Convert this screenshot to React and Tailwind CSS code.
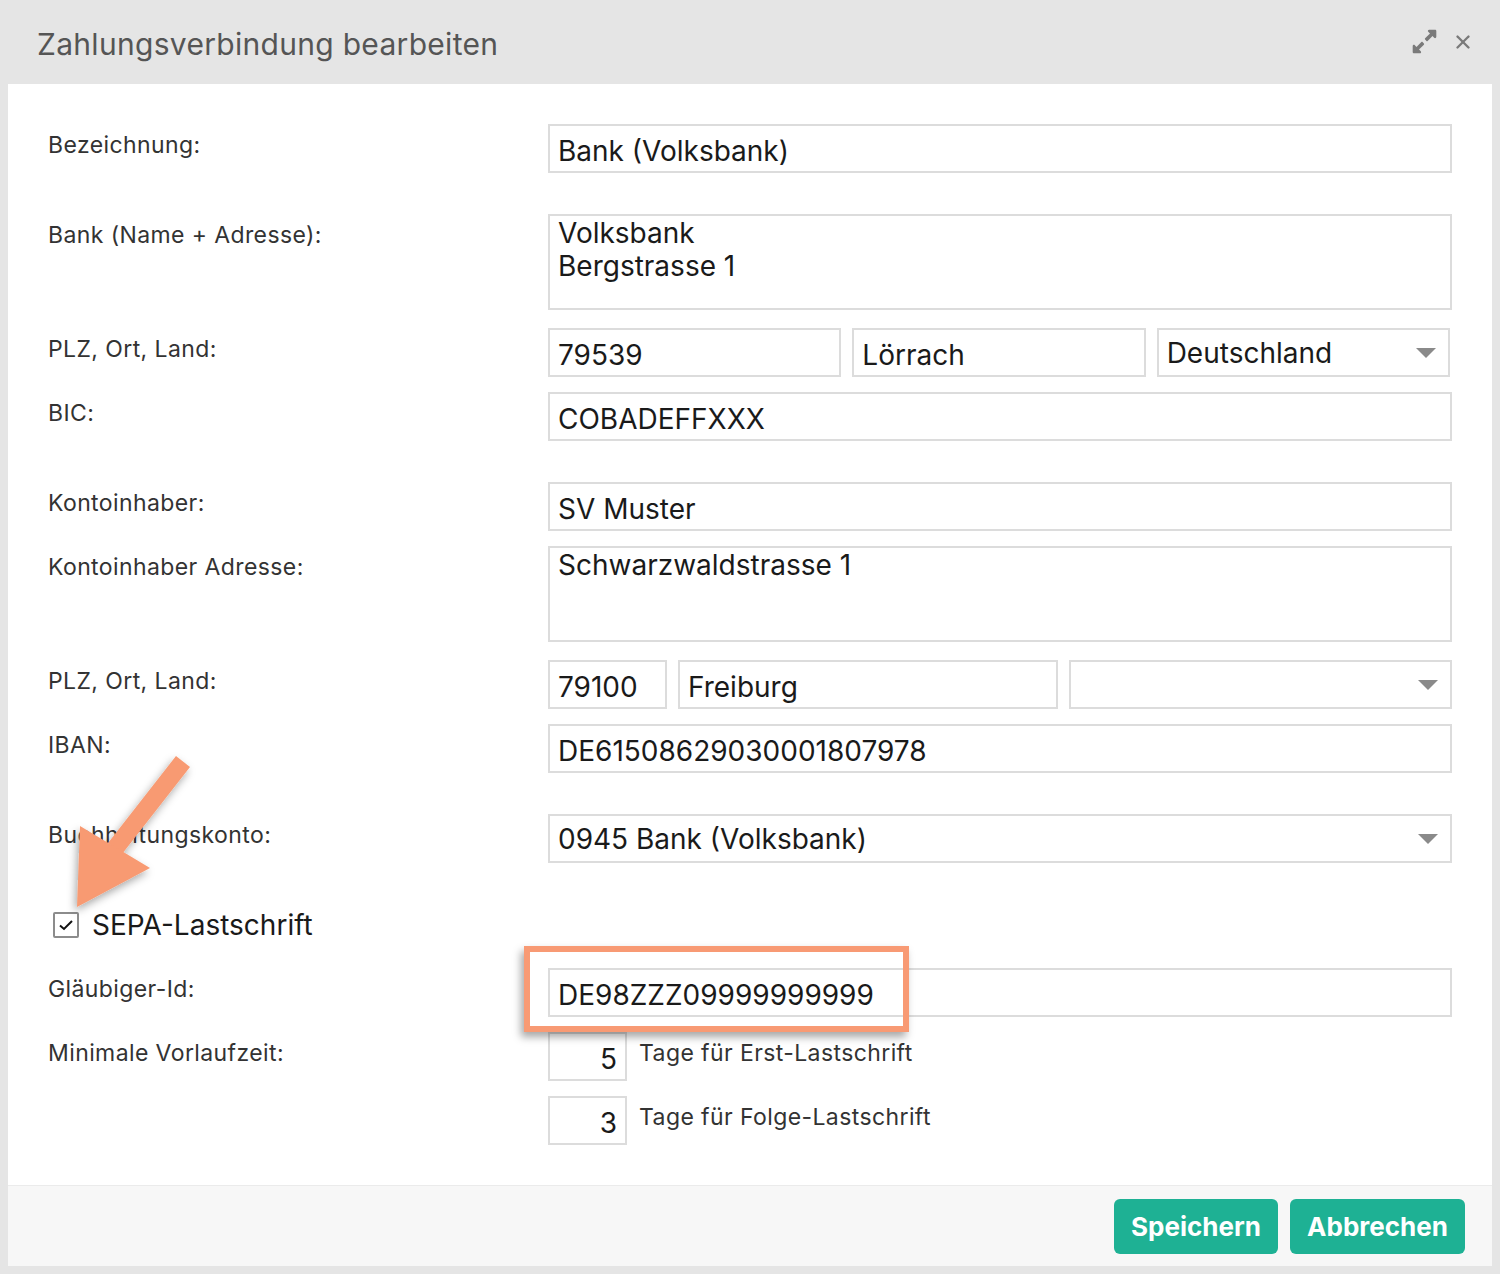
import React from 'react';
import { X } from 'lucide-react';
import { FaExpandAlt } from 'react-icons/fa';

const font = { fontFamily: 'Inter, "Noto Sans", sans-serif' };

const Label = ({ children }) => (
  <div className="w-[500px] shrink-0 pt-[8px] text-[23px] tracking-[0.4px] leading-[26px] text-[#333]">{children}</div>
);

const Input = ({ value, className = '' }) => (
  <div className={`h-[49px] border-2 border-[#dcdcdc] bg-white px-[8px] pt-[4px] flex items-center text-[28px] text-[#1a1a1a] whitespace-nowrap ${className}`}>
    {value}
  </div>
);

const TextArea = ({ lines }) => (
  <div className="h-[96px] flex-1 border-2 border-[#dcdcdc] bg-white px-[8px] pt-[1px] text-[28px] leading-[33px] text-[#1a1a1a]">
    {lines.map((l) => (
      <div key={l}>{l}</div>
    ))}
  </div>
);

const Select = ({ value, className = '' }) => (
  <div className={`h-[49px] border-2 border-[#dcdcdc] bg-white pl-[8px] pr-[12px] flex items-center justify-between text-[28px] text-[#1a1a1a] ${className}`}>
    <span>{value}</span>
    <svg width="20" height="10" viewBox="0 0 20 10">
      <polygon points="0,0 20,0 10,10" fill="#8a8a8a" />
    </svg>
  </div>
);

const Row = ({ label, mt, children }) => (
  <div className={`flex ${mt}`}>
    <Label>{label}</Label>
    <div className="flex-1 min-w-0">{children}</div>
  </div>
);

export default function App() {
  return (
    <div className="relative w-[1500px] h-[1274px] bg-[#e5e5e5] flex flex-col overflow-hidden" style={font}>
      {/* Header */}
      <div className="h-[84px] shrink-0 flex items-center justify-between pl-[37px] pr-[26px] pt-[5px]">
        <h1 className="text-[30px] tracking-[0.3px] text-[#555] font-normal">Zahlungsverbindung bearbeiten</h1>
        <div className="flex items-center gap-[14px] text-[#7a7a7a] mb-[6px]">
          <FaExpandAlt size={27} />
          <X size={22} strokeWidth={2.6} />
        </div>
      </div>

      {/* Body */}
      <div className="mx-[8px] bg-white px-[40px] pt-[40px] pb-[40px]">
        <Row label="Bezeichnung:" mt="">
          <Input value="Bank (Volksbank)" />
        </Row>
        <Row label="Bank (Name + Adresse):" mt="mt-[41px]">
          <div className="flex">
            <TextArea lines={['Volksbank', 'Bergstrasse 1']} />
          </div>
        </Row>
        <Row label="PLZ, Ort, Land:" mt="mt-[18px]">
          <div className="grid grid-cols-3 gap-[11px] pr-[2px]">
            <Input value="79539" />
            <Input value="Lörrach" />
            <Select value="Deutschland" />
          </div>
        </Row>
        <Row label="BIC:" mt="mt-[15px]">
          <Input value="COBADEFFXXX" />
        </Row>
        <Row label="Kontoinhaber:" mt="mt-[41px]">
          <Input value="SV Muster" />
        </Row>
        <Row label="Kontoinhaber Adresse:" mt="mt-[15px]">
          <div className="flex">
            <TextArea lines={['Schwarzwaldstrasse 1']} />
          </div>
        </Row>
        <Row label="PLZ, Ort, Land:" mt="mt-[18px]">
          <div className="flex gap-[11px]">
            <Input value="79100" className="w-[119px]" />
            <Input value="Freiburg" className="flex-1" />
            <Select value="" className="flex-1" />
          </div>
        </Row>
        <Row label="IBAN:" mt="mt-[15px]">
          <Input value="DE61508629030001807978" />
        </Row>
        <Row label="Buchhaltungskonto:" mt="mt-[41px]">
          <Select value="0945 Bank (Volksbank)" />
        </Row>

        {/* SEPA checkbox */}
        <div className="mt-[37px] h-[49px] flex items-center pl-[5px] gap-[13px]">
          <div className="w-[26px] h-[26px] border-2 border-[#8c8c8c] rounded-[2px] bg-white flex items-center justify-center">
            <svg width="16" height="12" viewBox="0 0 16 12">
              <path d="M2 6.5 L6 10 L14 2" fill="none" stroke="#111" strokeWidth="2" />
            </svg>
          </div>
          <span className="text-[28px] text-[#1a1a1a]">SEPA-Lastschrift</span>
        </div>

        <Row label="Gläubiger-Id:" mt="mt-[19px]">
          <div className="relative">
            <Input value="DE98ZZZ09999999999" />
            <div className="absolute left-[-24px] top-[-22px] w-[385px] h-[86px] border-[6px] border-[#f89a74] shadow-[-3px_5px_8px_rgba(0,0,0,0.35)]" />
          </div>
        </Row>
        <Row label="Minimale Vorlaufzeit:" mt="mt-[15px]">
          <div className="flex items-start gap-[12px]">
            <Input value="5" className="w-[79px] justify-end" />
            <span className="pt-[8px] text-[23px] tracking-[0.4px] leading-[26px] text-[#333]">Tage für Erst-Lastschrift</span>
          </div>
        </Row>
        <Row label="" mt="mt-[15px]">
          <div className="flex items-start gap-[12px]">
            <Input value="3" className="w-[79px] justify-end" />
            <span className="pt-[8px] text-[23px] tracking-[0.4px] leading-[26px] text-[#333]">Tage für Folge-Lastschrift</span>
          </div>
        </Row>
      </div>

      {/* Footer */}
      <div className="mx-[8px] h-[81px] bg-[#f7f7f7] border-t border-[#ebebeb] flex items-center justify-end gap-[12px] pr-[27px]">
        <button className="h-[55px] w-[164px] rounded-[6px] bg-[#1eb194] text-white text-[26px] font-bold">Speichern</button>
        <button className="h-[55px] w-[175px] rounded-[6px] bg-[#1eb194] text-white text-[26px] font-bold">Abbrechen</button>
      </div>

      {/* Annotation arrow */}
      <svg className="absolute inset-0 pointer-events-none" width="1500" height="1274">
        <defs>
          <filter id="sh" x="-50%" y="-50%" width="200%" height="200%">
            <feDropShadow dx="-2" dy="4" stdDeviation="4" floodColor="#000" floodOpacity="0.35" />
          </filter>
        </defs>
        <g filter="url(#sh)" fill="#f89a72">
          <polygon points="176,756 190,767 122,854 108,843" />
          <polygon points="77,907 80,826 150,868" />
        </g>
      </svg>
    </div>
  );
}
